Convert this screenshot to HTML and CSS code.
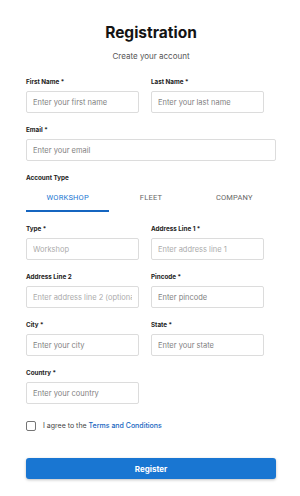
FILE: index.html
```html
<!doctype html>
<html lang="en">
  <head>
    <meta charset="UTF-8" />
    <meta name="viewport" content="width=device-width, initial-scale=1.0" />
    <title>Registration</title>
    <link rel="stylesheet" href="styles.css">
  </head>
  <body>
    <div class="container">
      <h1>Registration</h1>
      <div class="subtitle">Create your account</div>

      <form class="form" onsubmit="return false">
        <div class="row">
          <div class="field">
            <label>First Name *</label>
            <input type="text" placeholder="Enter your first name" />
          </div>
          <div class="field">
            <label>Last Name *</label>
            <input type="text" placeholder="Enter your last name" />
          </div>
        </div>

        <div class="field full">
          <label>Email *</label>
          <input type="email" placeholder="Enter your email" />
        </div>

        <div class="field full">
          <label>Account Type</label>
          <div class="tabs">
            <button type="button" class="tab active">Workshop</button>
            <button type="button" class="tab">Fleet</button>
            <button type="button" class="tab">Company</button>
          </div>
        </div>

        <div class="row">
          <div class="field">
            <label>Type *</label>
            <input type="text" class="light" placeholder="Workshop" disabled />
          </div>
          <div class="field">
            <label>Address Line 1 *</label>
            <input type="text" class="light" placeholder="Enter address line 1" />
          </div>
        </div>

        <div class="row">
          <div class="field">
            <label>Address Line 2</label>
            <input type="text" class="light" placeholder="Enter address line 2 (optional)" />
          </div>
          <div class="field">
            <label>Pincode *</label>
            <input type="text" placeholder="Enter pincode" />
          </div>
        </div>

        <div class="row">
          <div class="field">
            <label>City *</label>
            <input type="text" placeholder="Enter your city" />
          </div>
          <div class="field">
            <label>State *</label>
            <input type="text" placeholder="Enter your state" />
          </div>
        </div>

        <div class="row">
          <div class="field">
            <label>Country *</label>
            <input type="text" placeholder="Enter your country" />
          </div>
        </div>

        <label class="agree">
          <span class="checkbox"></span>
          <span>I agree to the <a href="#">Terms and Conditions</a></span>
        </label>

        <button type="submit" class="register-btn">Register</button>
      </form>
    </div>

    <script>
      document.querySelectorAll(".tab").forEach((tab) => {
        tab.addEventListener("click", () => {
          document.querySelector(".tab.active").classList.remove("active");
          tab.classList.add("active");
        });
      });
    </script>
  </body>
</html>
```

FILE: styles.css
```css
* {
  margin: 0;
  padding: 0;
  box-sizing: border-box;
}

body {
  font-family: "Inter", "Roboto", sans-serif;
  background: #fff;
  color: #1a1a1a;
}

.container {
  padding: 24px 24px 20px 26px;
}

h1 {
  font-size: 15.5px;
  font-weight: 700;
  text-align: center;
  line-height: 18px;
  color: #141414;
}

.subtitle {
  font-size: 8px;
  color: #555;
  text-align: center;
  margin-top: 9px;
  line-height: 10px;
}

.form {
  margin-top: 17px;
}

.row {
  display: grid;
  grid-template-columns: 1fr 1fr;
}

.row .field {
  padding-right: 12px;
}

.field {
  margin-bottom: 13px;
}

.field label {
  display: block;
  font-size: 6.3px;
  font-weight: 700;
  line-height: 8px;
  color: #222;
  margin-bottom: 5px;
}

.field input {
  display: block;
  width: 100%;
  height: 22px;
  border: 1px solid #dcdcdc;
  border-radius: 2px;
  padding: 0 6px;
  font-family: inherit;
  font-size: 7.5px;
  color: #222;
  background: #fff;
}

.field input::placeholder {
  color: #7f7f7f;
}

.field input.light::placeholder {
  color: #ababab;
}

.tabs {
  display: flex;
  margin-top: -3px;
}

.tab {
  flex: 1;
  height: 28px;
  border: none;
  background: none;
  font-family: "Roboto", sans-serif;
  font-size: 7.5px;
  text-transform: uppercase;
  letter-spacing: 0.2px;
  color: #666;
  border-bottom: 2px solid transparent;
  cursor: pointer;
}

.tab.active {
  color: #1976d2;
  border-bottom-color: #1565c0;
}

.agree {
  display: flex;
  align-items: center;
  gap: 7px;
  font-size: 7px;
  line-height: 10px;
  color: #444;
  margin-top: 4px;
}

.checkbox {
  width: 10px;
  height: 10px;
  border: 1.5px solid #757575;
  border-radius: 2px;
}

.agree a {
  color: #1565c0;
  font-weight: 500;
  text-decoration: none;
}

.register-btn {
  display: block;
  width: 100%;
  height: 21px;
  margin-top: 27px;
  border: none;
  border-radius: 3px;
  background: #1976d2;
  color: #fff;
  font-family: inherit;
  font-size: 8px;
  font-weight: 700;
  box-shadow: 0 1px 3px rgba(0, 0, 0, 0.25);
  cursor: pointer;
}
```
